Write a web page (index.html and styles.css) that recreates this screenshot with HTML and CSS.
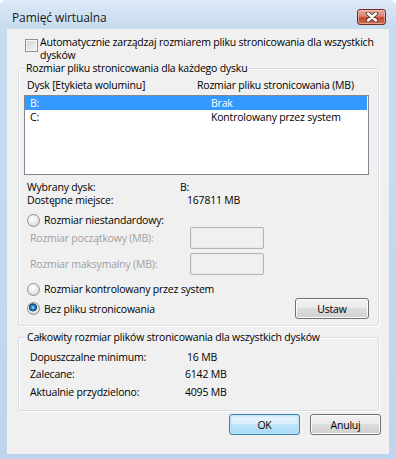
FILE: index.html
```html
<!DOCTYPE html>
<html lang="pl">
<head>
  <meta charset="UTF-8">
  <title>Pamięć wirtualna</title>
  <meta name="viewport" content="width=device-width, initial-scale=1.0">
  <link rel="stylesheet" href="styles.css">
</head>
<body>

  <div class="window">
    <div class="titlebar">
      <span class="title">Pamięć wirtualna</span>
      <span class="close">
        <svg width="14" height="10" viewBox="0 0 14 10">
          <path d="M3 1.5 L11 8.5 M11 1.5 L3 8.5" stroke="#4a3a38" stroke-width="4.2" stroke-linecap="round"/>
          <path d="M3 1.5 L11 8.5 M11 1.5 L3 8.5" stroke="#fff" stroke-width="2.4" stroke-linecap="round"/>
        </svg>
      </span>
    </div>

    <div class="client">
      <div class="auto">
        <span class="check"></span>
        <span>Automatycznie zarządzaj rozmiarem pliku stronicowania dla wszystkich<br>dysków</span>
      </div>

      <div class="group drives">
        <div class="legend">Rozmiar pliku stronicowania dla każdego dysku</div>
        <div class="headers">
          <span class="head-col">Dysk [Etykieta woluminu]</span>
          <span>Rozmiar pliku stronicowania (MB)</span>
        </div>
        <div class="listbox">
          <div class="row selected"><span class="row-col">B:</span><span>Brak</span></div>
          <div class="row"><span class="row-col">C:</span><span>Kontrolowany przez system</span></div>
        </div>

        <div class="info first"><span class="info-label">Wybrany dysk:</span><span>B:</span></div>
        <div class="info"><span class="info-label wide">Dostępne miejsce:</span><span>167811 MB</span></div>

        <div class="radio-row first">
          <span class="radio"></span>
          <span>Rozmiar niestandardowy:</span>
        </div>
        <div class="field-row">
          <span class="field-label">Rozmiar początkowy (MB):</span>
          <span class="field-box"></span>
        </div>
        <div class="field-row second">
          <span class="field-label">Rozmiar maksymalny (MB):</span>
          <span class="field-box"></span>
        </div>
        <div class="radio-row system">
          <span class="radio"></span>
          <span>Rozmiar kontrolowany przez system</span>
        </div>
        <div class="last-row">
          <div class="radio-inline">
            <span class="radio on"></span>
            <span>Bez pliku stronicowania</span>
          </div>
          <span class="btn set">Ustaw</span>
        </div>
      </div>

      <div class="group totals">
        <div class="legend">Całkowity rozmiar plików stronicowania dla wszystkich dysków</div>
        <div class="sum-row first"><span class="sum-label">Dopuszczalne minimum:</span><span class="min">16 MB</span></div>
        <div class="sum-row"><span class="sum-label">Zalecane:</span><span>6142 MB</span></div>
        <div class="sum-row last"><span class="sum-label">Aktualnie przydzielono:</span><span>4095 MB</span></div>
      </div>

      <div class="buttons">
        <span class="btn default">OK</span>
        <span class="btn">Anuluj</span>
      </div>
    </div>
  </div>

</body>
</html>
```

FILE: styles.css
```css
body {
  margin: 0;
  font-family: "Open Sans", "Noto Sans", sans-serif;
  font-size: 10.5px;
  letter-spacing: -0.2px;
  color: #000;
}
.window {
  width: 396px;
  height: 459px;
  display: flex;
  flex-direction: column;
  border-radius: 6px 6px 0 0;
  background: linear-gradient(#dde9f6 0, #c8dcf0 26px, #bfd5ed 100%);
  overflow: hidden;
}
.titlebar {
  height: 29px;
  display: flex;
  justify-content: space-between;
  align-items: flex-start;
}
.title {
  margin: 10px 0 0 12px;
  font-size: 12px;
  letter-spacing: -0.1px;
  line-height: 16px;
  color: #1a1a1a;
}
.close {
  box-sizing: border-box;
  width: 29px;
  height: 16px;
  margin: 9px 10px 0 0;
  display: flex;
  align-items: center;
  justify-content: center;
  border: 1px solid #6e2a22;
  border-radius: 3px;
  background: linear-gradient(#e9a99b 0, #d8826f 45%, #c4472f 55%, #d2684f 100%);
  box-shadow: inset 0 0 0 1px rgba(255, 220, 210, 0.5);
}
.client {
  height: 425px;
  margin: 0 7px 5px 7px;
  background: #f0f0f0;
}

/* case a cocher */
.auto {
  display: flex;
  padding: 7px 0 0 18px;
  line-height: 13px;
  white-space: nowrap;
}
.check {
  box-sizing: border-box;
  flex: none;
  width: 13px;
  height: 13px;
  margin: 3px 2px 0 0;
  border: 1px solid #8e8f8f;
  background: linear-gradient(135deg, #d2d2d2, #f4f4f4);
  box-shadow: inset 0 0 0 1px #f6f6f6;
}

/* groupes */
.group {
  box-sizing: border-box;
  width: 361px;
  margin: 6px 0 0 11px;
  border: 1px solid #d5dfe5;
  border-radius: 3px;
  box-shadow: inset 1px 1px 0 #fff, 1px 1px 0 #fff;
}
.drives {
  padding: 0 9px 6px 5px;
}
.totals {
  margin-top: 11px;
  padding: 0 9px 11px 5px;
}
.legend {
  width: fit-content;
  margin: -7px 0 0 1px;
  padding: 0 1px;
  line-height: 13px;
  background: #f0f0f0;
}
.totals .legend {
  margin-left: 2px;
}
.headers {
  display: flex;
  margin-top: 4px;
  padding-left: 3px;
  line-height: 13px;
}
.head-col {
  width: 170px;
}
.listbox {
  box-sizing: border-box;
  height: 80px;
  margin-top: 3px;
  border: 1px solid #828790;
  background: #fff;
}
.row {
  display: flex;
  margin-right: 1px;
  padding-left: 5px;
  line-height: 14px;
}
.row-col {
  width: 181px;
}
.row.selected {
  background: #3399ff;
  color: #fff;
}

.info {
  display: flex;
  padding-left: 3px;
  line-height: 13px;
}
.info.first {
  margin-top: 6px;
}
.info-label {
  width: 153px;
}
.info-label.wide {
  width: 160px;
}

.radio-row,
.radio-inline {
  display: flex;
  align-items: center;
  height: 14px;
}
.radio-row {
  padding-left: 3px;
}
.radio-row.first {
  margin-top: 6px;
}
.radio-row.system {
  margin-top: 7px;
}
.radio {
  box-sizing: border-box;
  flex: none;
  width: 13px;
  height: 13px;
  margin-right: 4px;
  border: 1px solid #8e8f8f;
  border-radius: 50%;
  background: radial-gradient(circle at 40% 35%, #fff 0, #f2f2f2 3px, #cfcfcf 100%);
}
.radio.on {
  background:
    radial-gradient(circle at 45% 40%, #a9e6fb 0, #3b97d8 1.6px, #174c80 3.4px, #123f6c 3.8px, transparent 4.3px),
    radial-gradient(circle at 40% 35%, #fff 0, #f2f2f2 3px, #cfcfcf 100%);
}

.field-row {
  display: flex;
  align-items: center;
  height: 22px;
  padding-left: 6px;
  color: #a0a0a0;
}
.field-row.second {
  margin-top: 4px;
}
.field-label {
  width: 160px;
}
.field-box {
  box-sizing: border-box;
  width: 74px;
  height: 22px;
  border: 1px solid #b4b4b4;
  border-radius: 2px;
  box-shadow: inset 0 0 0 1px #e9e9e9;
}

.last-row {
  display: flex;
  justify-content: space-between;
  align-items: center;
  height: 21px;
  margin-top: 2px;
  padding-left: 3px;
}

.sum-row {
  display: flex;
  padding-left: 6px;
  line-height: 13px;
  margin-top: 4px;
}
.sum-row.first {
  margin-top: 7px;
}
.sum-row.last {
  margin-top: 5px;
}
.sum-label {
  width: 155px;
}
.min {
  margin-left: 2px;
}

/* boutons */
.btn {
  box-sizing: border-box;
  height: 21px;
  display: flex;
  align-items: center;
  justify-content: center;
  border: 1px solid #707070;
  border-radius: 3px;
  background: linear-gradient(#f2f2f2 0, #ebebeb 45%, #dddddd 50%, #cfcfcf 100%);
  box-shadow: inset 0 0 0 1px #fbfbfb;
  width: 71px;
}
.btn.set {
  width: 74px;
}
.btn.default {
  border-color: #3c7fb1;
  background: linear-gradient(#eaf6fd 0, #d9f0fc 45%, #bee6fd 50%, #a7d9f5 100%);
  box-shadow: inset 0 0 0 1px #bfe6f9, inset 0 0 2px 1px #9fd6f4;
}
.buttons {
  display: flex;
  justify-content: flex-end;
  gap: 10px;
  margin: 3px 8px 0 0;
}
```
